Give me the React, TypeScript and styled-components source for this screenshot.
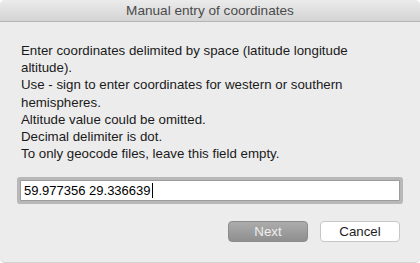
import React from 'react';
import styled, { createGlobalStyle } from 'styled-components';

const GlobalStyle = createGlobalStyle`
  html, body {
    margin: 0;
    padding: 0;
    background: #ffffff;
  }
  body {
    font-family: "Liberation Sans", Arial, sans-serif;
    -webkit-font-smoothing: antialiased;
  }
`;

const lines = [
  'Enter coordinates delimited by space (latitude longitude',
  'altitude).',
  'Use - sign to enter coordinates for western or southern',
  'hemispheres.',
  'Altitude value could be omitted.',
  'Decimal delimiter is dot.',
  'To only geocode files, leave this field empty.',
];

const App = () => {
  return (
    <>
      <GlobalStyle />
      <Window>
        <TitleBar>Manual entry of coordinates</TitleBar>
        <Body>
          <Message>
            {lines.map((line) => (
              <Line key={line}>{line}</Line>
            ))}
          </Message>
          <Field>
            59.977356 29.336639
            <Caret />
          </Field>
          <Buttons>
            <Button $disabled>Next</Button>
            <Button>Cancel</Button>
          </Buttons>
        </Body>
      </Window>
    </>
  );
};

export default App;

const Window = styled.div`
  width: 420px;
  height: 263px;
  box-sizing: border-box;
  background: #ececec;
  border-radius: 5px;
  border-bottom: 1px solid #d2d2d2;
  overflow: hidden;
  display: flex;
  flex-direction: column;
`;

const TitleBar = styled.div`
  height: 21px;
  flex-shrink: 0;
  border-bottom: 1px solid #b4b4b4;
  background: linear-gradient(#ebebeb, #d4d4d4);
  color: #4b4b4b;
  font-size: 13.6px;
  line-height: 21px;
  text-align: center;
`;

const Body = styled.div`
  display: flex;
  flex-direction: column;
  padding: 20px 20px 0 20px;
`;

const Message = styled.div`
  padding-left: 1px;
  color: #1a1a1a;
  font-size: 13.3px;
  line-height: 17.2px;
`;

const Line = styled.div`
  white-space: nowrap;
`;

const Field = styled.div`
  margin-top: 18px;
  height: 21px;
  box-sizing: border-box;
  display: flex;
  align-items: center;
  padding-left: 3px;
  background: #ffffff;
  border: 1px solid #9c9c9c;
  box-shadow: 0 0 0 3px #b8b8b8;
  border-radius: 1px;
  color: #000000;
  font-size: 13px;
`;

const Caret = styled.span`
  display: inline-block;
  width: 1px;
  height: 15px;
  margin-left: 1px;
  background: #000000;
`;

const Buttons = styled.div`
  display: flex;
  justify-content: flex-end;
  gap: 12px;
  margin-top: 20px;
`;

const Button = styled.div<{ $disabled?: boolean }>`
  width: 80px;
  height: 21px;
  box-sizing: border-box;
  border-radius: 4px;
  font-size: 13.3px;
  line-height: 19px;
  text-align: center;
  border: 1px solid ${(p) => (p.$disabled ? '#8c8c8c' : '#c6c6c6')};
  background: ${(p) =>
    p.$disabled ? 'linear-gradient(#acacac, #8f8f8f)' : '#ffffff'};
  color: ${(p) => (p.$disabled ? '#eeeeee' : '#1e1e1e')};
`;
